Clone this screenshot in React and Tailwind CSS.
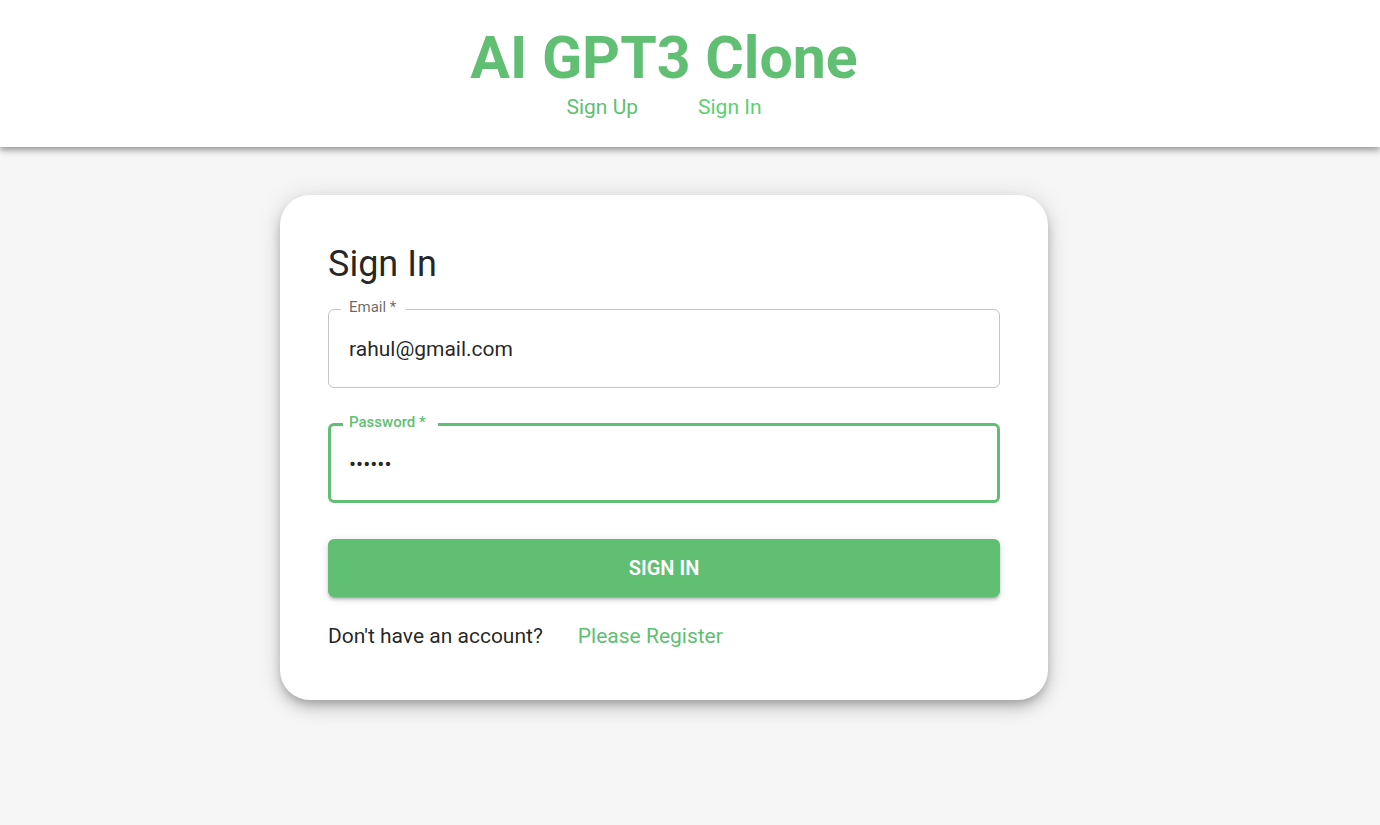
import { useState } from "react";

export default function App() {
  const [email, setEmail] = useState("rahul@gmail.com");
  const [password, setPassword] = useState("secret");

  return (
    <div className="min-h-screen bg-[#f6f6f6] font-['Roboto',sans-serif] text-[21px] text-black/87">
      <header className="flex flex-col items-center bg-white pt-6 pr-[52px] pb-6 text-[#61bf73] shadow-[0_3px_6px_0_rgba(0,0,0,0.3),0_2px_10px_0_rgba(0,0,0,0.15)]">
        <h1 className="text-[59px] leading-[68px] font-bold">AI GPT3 Clone</h1>
        <nav className="flex gap-[60px] leading-[31px]">
          <a href="#register">Sign Up</a>
          <a href="#login" className="text-[#5bd16b]">Sign In</a>
        </nav>
      </header>

      <main className="flex justify-center pt-12 pr-[52px]">
        <form
          className="w-[768px] max-w-full rounded-[30px] bg-white p-12 shadow-[0_5px_8px_-2px_rgba(0,0,0,0.2),0_9px_15px_0_rgba(0,0,0,0.14),0_2px_27px_0_rgba(0,0,0,0.12)]"
          onSubmit={(e) => e.preventDefault()}
        >
          <h2 className="text-[36px] leading-[42px]">Sign In</h2>

          <fieldset className="mt-[14px] h-[89px] rounded-[6px] border border-[#c4c4c4] px-3">
            <legend className="h-5 pr-[10px] pl-2 text-[15px] leading-4 text-black/60">
              <label htmlFor="email" className="block">Email *</label>
            </legend>
            <input
              id="email"
              type="email"
              required
              value={email}
              onChange={(e) => setEmail(e.target.value)}
              className="h-[59px] w-full px-2 outline-none"
            />
          </fieldset>

          <fieldset className="mt-[26px] h-[89px] rounded-[6px] border-3 border-[#61bf73] px-3">
            <legend className="h-5 pr-3 pl-[6px] text-[15px] leading-4 font-medium text-[#61bf73]">
              <label htmlFor="password" className="block">Password *</label>
            </legend>
            <input
              id="password"
              type="password"
              required
              value={password}
              onChange={(e) => setPassword(e.target.value)}
              className="h-[59px] w-full px-[6px] outline-none"
            />
          </fieldset>

          <button
            type="submit"
            className="mt-9 block h-[58px] w-full rounded-[6px] bg-[#61bf73] text-[20px] font-semibold text-white uppercase shadow-[0_4px_2px_-3px_rgba(0,0,0,0.2),0_3px_3px_0_rgba(0,0,0,0.14),0_2px_8px_0_rgba(0,0,0,0.12)]"
          >
            Sign In
          </button>

          <p className="mt-[23px] flex gap-[35px] leading-8">
            Don't have an account?
            <a href="#register" className="text-[#61bf73]">Please Register</a>
          </p>
        </form>
      </main>
    </div>
  );
}
